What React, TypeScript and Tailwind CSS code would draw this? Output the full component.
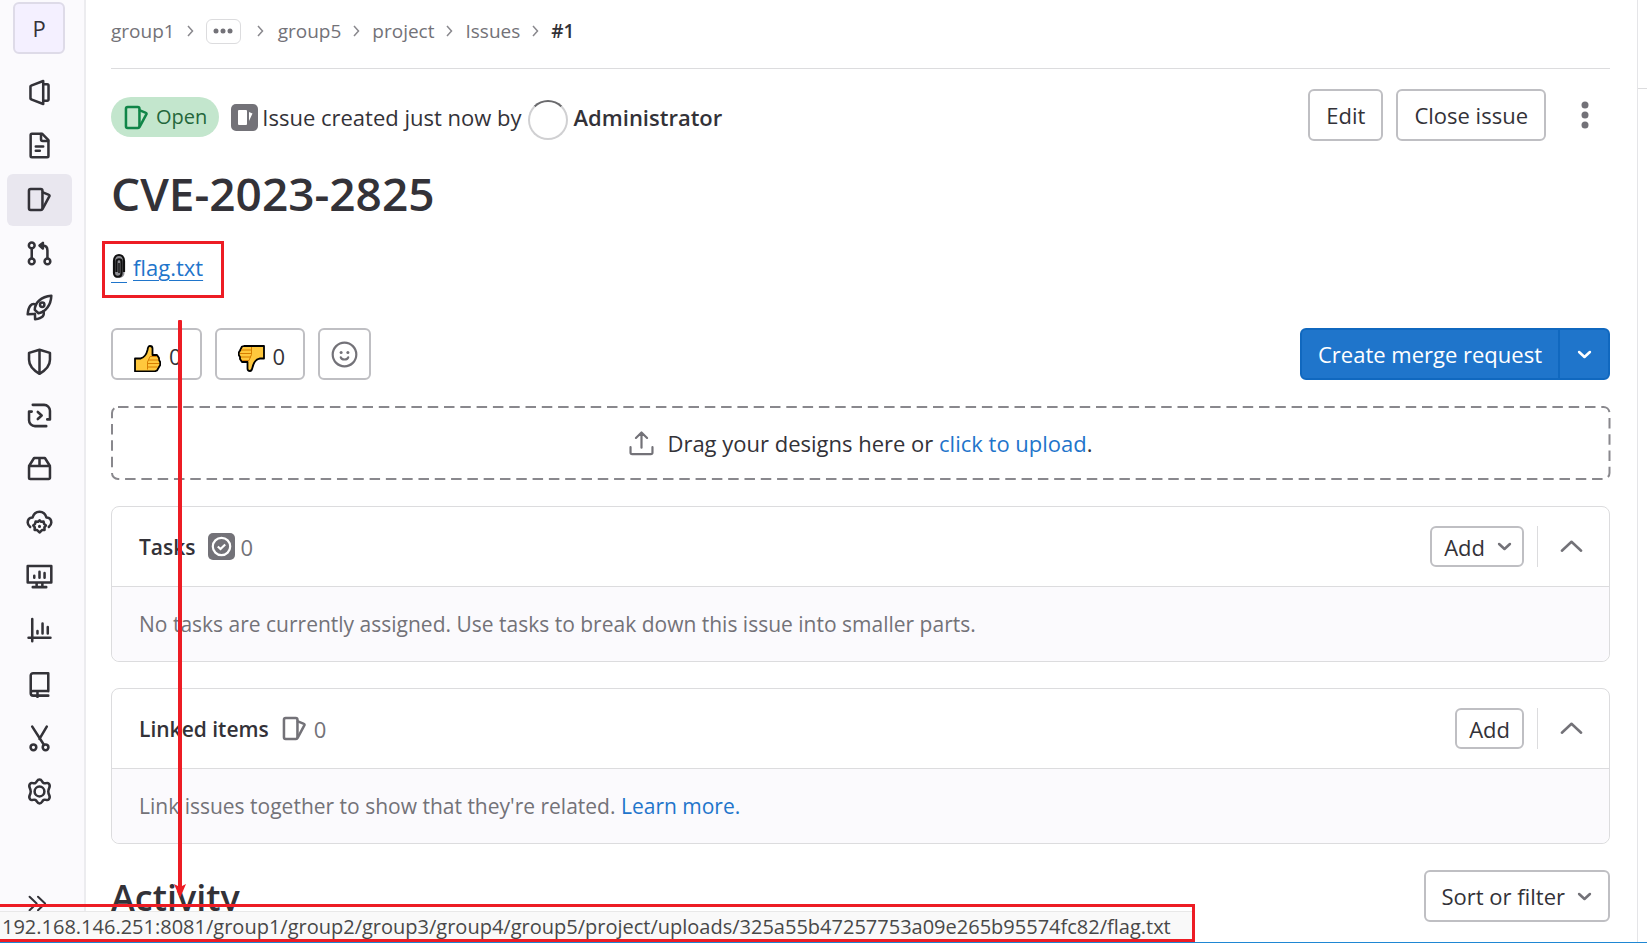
import type { ReactNode } from "react";

function Icon({ children, className = "size-[27px]" }: { children: ReactNode; className?: string }) {
  return (
    <svg
      viewBox="0 0 16 16"
      className={`shrink-0 ${className}`}
      fill="none"
      stroke="currentColor"
      strokeWidth="1.5"
      strokeLinecap="round"
      strokeLinejoin="round"
      aria-hidden="true"
    >
      {children}
    </svg>
  );
}

const issuePaths = (
  <>
    <rect x="1.75" y="1.75" width="8" height="12.5" rx="1" />
    <path d="M10 3.8l3.6 1.5a.5.5 0 0 1 .3.7L10 13.2" />
  </>
);

const navItems: { label: string; icon: ReactNode; active?: boolean }[] = [
  {
    label: "Project",
    icon: (
      <>
        <path d="M2.65 4.5a.6.6 0 0 1 .4-.55L10.2 1.2v13.6l-7.15-2.75a.6.6 0 0 1-.4-.55z" />
        <path d="M10.2 3.1h2.4a.75.75 0 0 1 .75.75v8.3a.75.75 0 0 1-.75.75h-2.4" />
      </>
    ),
  },
  {
    label: "Plan",
    icon: (
      <>
        <path d="M2.75 1.75A.75.75 0 0 1 3.5 1h6L13.3 4.8v9.45a.75.75 0 0 1-.75.75H3.5a.75.75 0 0 1-.75-.75z" />
        <path d="M8.9 1.2v3.1c0 .6.4 1 1 1h3.2M5.8 8.6h4.4M5.8 11.1h2.4" />
      </>
    ),
  },
  { label: "Issues", icon: issuePaths, active: true },
  {
    label: "Merge requests",
    icon: (
      <>
        <circle cx="3.4" cy="3.2" r="1.7" />
        <circle cx="3.4" cy="12.7" r="1.7" />
        <circle cx="12.7" cy="12.7" r="1.7" />
        <path d="M3.4 5v5.8M12.7 10.8V6.2c0-1.8-1-2.9-2.8-2.9H8.6" />
        <path d="M10 1.7v3.4L8 3.3z" fill="currentColor" />
      </>
    ),
  },
  {
    label: "Build",
    icon: (
      <>
        <path d="M5.2 9.4C5.2 5.2 8.9 1.5 15 1c-.2 5.6-3.4 9.6-7.6 10.4z" />
        <circle cx="9.6" cy="6.4" r="1.3" />
        <path d="M5.8 6.2C3 5.2 1.4 7.5 1 12l3.3-.2M10.3 10.2c.8 2.4-.2 4-4.900 4.800l-.1-3.300" />
      </>
    ),
  },
  {
    label: "Secure",
    icon: <path d="M8 1L14.2 2.9V7c0 3.7-2.2 6-6.2 8.3C4 13 1.8 10.7 1.8 7V2.9zM8 1v14" />,
  },
  {
    label: "Deploy",
    icon: (
      <>
        <path d="M4 1.7h6.7a3.5 3.5 0 0 1 3.5 3.5v5.100h-1.600M12 14.300H5.300a3.500 3.500 0 0 1-3.500-3.500V5.700h1.600" />
        <path d="M7 5.9L9.3 8 7 10.1" />
      </>
    ),
  },
  {
    label: "Packages",
    icon: (
      <path d="M1.8 6.5h12.4v7a.75.75 0 0 1-.75.75H2.55a.75.75 0 0 1-.75-.75zM1.8 6.5l3-4.7h6.4l3 4.7M8 2v4.3" />
    ),
  },
  {
    label: "Operate",
    icon: (
      <>
        <path d="M2.5 10.6C1.5 9.8 1 9 1 8c0-1.8 1.2-2.9 2.9-3C4.5 2.8 6 1.6 8 1.6s3.5 1.2 4.1 3.4c1.7.1 2.9 1.2 2.9 3 0 1-.5 1.8-1.5 2.6" />
        <path d="M8 6.7l1 .9 1.4-.2.3 1.4 1.1 1-.9 1.1.1 1.5-1.5.1L8 13.9l-1.400-1.400-1.500-.1.100-1.500-.9-1.100 1.100-1 .3-1.400 1.400.2z" />
        <circle cx="8" cy="10.3" r="0.5" fill="currentColor" strokeWidth="0.8" />
      </>
    ),
  },
  {
    label: "Monitor",
    icon: (
      <path d="M1 1.8h14v9.7H1zM4 14.3h8M6.3 11.7v2.4M9.7 11.7v2.4M4.9 7.5v1.2M8 5.2v3.5M11 6v2.7" />
    ),
  },
  {
    label: "Analyze",
    icon: <path d="M3.7 1.2v13.1M1.5 12.3h13M6.8 8.3v1.5M9.8 3.8v6M12.900 6v3.800" />,
  },
  {
    label: "Wiki",
    icon: (
      <path d="M13.2 12V1.3H4.2c-.8 0-1.4.6-1.4 1.4v10.5c0 .8.6 1.4 1.4 1.4h9M13.2 11.9H4.1c-.8 0-1.3.5-1.3 1.2M6.8 12.2v3.2" />
    ),
  },
  {
    label: "Snippets",
    icon: (
      <>
        <circle cx="4.4" cy="13.2" r="1.7" />
        <circle cx="11.6" cy="13.2" r="1.7" />
        <path d="M3.7 1l6.9 10.7M12.3 1L8 8.2" />
      </>
    ),
  },
  {
    label: "Settings",
    icon: (
      <>
        <path d="M8 .9c1.6 0 1.3 1.5 2.5 2.1s2-.7 3 .3c1.6 1.9-.3 2.3-.3 4.7s1.9 2.8.3 4.7c-1 1-1.9-.3-3 .3S9.6 15.1 8 15.1s-1.3-1.500-2.500-2.100-2 .7-3-.3C.9 10.800 2.800 10.400 2.800 8S.9 5.200 2.500 3.300c1-1 1.900.3 3-.3S6.400.9 8 .9z" />
        <circle cx="8" cy="8" r="2.9" />
      </>
    ),
  },
];

function Chevron({ className = "" }: { className?: string }) {
  return (
    <Icon className={`size-[27px] ${className}`}>
      <path d="M4.8 6.5L8 9.5l3.2-3" />
    </Icon>
  );
}

function ThumbUp() {
  return (
    <svg viewBox="0 0 27 27" className="size-[27px] shrink-0" aria-hidden="true">
      <path
        d="M1 13.500h5.500c3-.5 6-4 7-8.500C14 1.500 14.500 1 16 1s2.500 1 2.500 2.500V10H23l2 3v2l1.200 2v3L25 22l-2 3.500-2 .8H1z"
        fill="#ffc83d"
        stroke="#000"
        strokeWidth="1.8"
        strokeLinejoin="round"
      />
      <path d="M13.5 24.5V17l2.500-5.500h7M14 15h10.500M14 18.500h11M14 22h9.500" fill="none" stroke="#d67d00" strokeWidth="1" />
    </svg>
  );
}

function ThumbDown() {
  return (
    <svg viewBox="0 0 27 27" className="size-[27px] shrink-0" aria-hidden="true">
      <path
        d="M26 1v12.500h-4c-3.500.5-6.500 4-7.500 9-.5 2.500-1 3.500-2.500 3.500s-2.500-1-2.500-2.500V17H4l-2-3v-2L.8 10V7.500L2 5.500 4 1.500 6 1z"
        fill="#ffc83d"
        stroke="#000"
        strokeWidth="1.8"
        strokeLinejoin="round"
      />
      <path d="M13.5 2v7.500l-2.500 6H4M13 5H3M13 8.500H2M13 12H3" fill="none" stroke="#d67d00" strokeWidth="1" />
    </svg>
  );
}

function Separator() {
  return (
    <svg viewBox="0 0 7 12" className="h-3 w-[7px] shrink-0" fill="none" stroke="#89888d" strokeWidth="1.5" aria-hidden="true">
      <path d="M1 1l4.500 5L1 11" />
    </svg>
  );
}

const outline = "flex items-center rounded-md border-2 border-[#bfbfc3] bg-white";

function Card({
  title,
  icon,
  action,
  children,
}: {
  title: string;
  icon: ReactNode;
  action: ReactNode;
  children: ReactNode;
}) {
  return (
    <section className="mt-[26px] rounded-lg border border-[#dcdcde] bg-white">
      <header className="flex h-20 items-center border-b border-[#dcdcde] pr-6 pl-[27px]">
        <h3 className="text-[21px] font-semibold">{title}</h3>
        <span className="ml-3 flex items-center gap-1.5 text-[#737278]">
          {icon}
          <span>0</span>
        </span>
        <div className="ml-auto flex items-center">
          {action}
          <span className="ml-[13px] h-[41px] border-l border-[#dcdcde]" />
          <button aria-label={`Collapse ${title}`} className="ml-5 text-[#737278]">
            <Icon className="size-[27px]">
              <path d="M2.3 10.500L8 5.200l5.700 5.300" />
            </Icon>
          </button>
        </div>
      </header>
      <p className="flex h-[74px] items-center rounded-b-lg bg-[#fbfafd] px-[27px] text-[21px] text-[#737278]">
        <span>{children}</span>
      </p>
    </section>
  );
}

export default function App() {
  return (
    <div className="relative flex h-screen overflow-hidden bg-white font-['Open_Sans','Noto_Sans',sans-serif] text-[22px] leading-8 text-[#333238]">
      <aside className="flex w-[86px] shrink-0 flex-col border-r-2 border-[#ececef] bg-[#fbfafd]">
        <a
          href="#project"
          className="mt-0.5 ml-[13px] flex size-[52px] shrink-0 items-center justify-center rounded-md border-2 border-[#dedbe8] bg-[#f4f0ff]"
        >
          P
        </a>
        <nav className="mt-3 ml-[7px] flex h-[752px] w-[65px] shrink-0 flex-col justify-between">
          {navItems.map((item) => (
            <a
              key={item.label}
              href="#nav"
              aria-label={item.label}
              className={`flex h-[52px] items-center justify-center rounded-md ${item.active ? "bg-[#e9e7ef]" : ""}`}
            >
              <Icon>{item.icon}</Icon>
            </a>
          ))}
        </nav>
        <button aria-label="Expand sidebar" className="mt-auto mb-[28px] ml-6 w-[27px]">
          <Icon className="size-[27px]">
            <path d="M3.3 4L7.5 8l-4.200 4M8.300 4l4.200 4-4.200 4" strokeWidth="1.2" />
          </Icon>
        </button>
      </aside>

      <main className="min-w-0 flex-1 pr-[27px] pl-[25px]">
        <nav
          aria-label="Breadcrumb"
          className="flex h-[69px] items-center gap-3 border-b border-[#dcdcde] pb-1.5 text-[19px] text-[#737278]"
        >
          <a href="#group1">group1</a>
          <Separator />
          <button aria-label="Show more" className="mr-1 flex h-[25px] w-[35px] items-center justify-center rounded-md border border-[#dcdcde]">
            <svg viewBox="0 0 20 6" className="h-1.5 w-5" fill="currentColor" aria-hidden="true">
              <circle cx="3" cy="3" r="2.5" />
              <circle cx="10" cy="3" r="2.5" />
              <circle cx="17" cy="3" r="2.5" />
            </svg>
          </button>
          <Separator />
          <a href="#group5" className="ml-0.5">group5</a>
          <Separator />
          <a href="#project">project</a>
          <Separator />
          <a href="#issues">Issues</a>
          <Separator />
          <a href="#1" className="font-semibold text-[#333238]">#1</a>
        </nav>

        <div className="mt-5 flex h-[52px] items-center">
          <div className="flex items-center pt-1">
            <span className="flex h-10 items-center gap-1.5 rounded-full bg-[#c3e6cd] px-3 text-[20px] text-[#24663b]">
              <Icon className="size-[27px] text-[#108548]">{issuePaths}</Icon>
              Open
            </span>
            <svg viewBox="0 0 27 27" className="ml-3 size-[27px] shrink-0" aria-hidden="true">
              <rect width="27" height="27" rx="5" fill="#737278" />
              <rect x="7" y="6" width="9" height="15" rx="1" fill="#fff" />
              <path d="M18 8l3.500 1.500L18 17z" fill="#fff" />
            </svg>
            <span className="ml-1">Issue created just now by</span>
            <span className="mx-1.5 mt-1.5 size-10 rounded-full border-2 border-[#d0d0d2] border-t-[#6a6a6d] bg-white" />
            <a href="#admin" className="font-semibold">Administrator</a>
          </div>
          <div className="ml-auto flex items-center gap-[13px]">
            <button className={`${outline} h-[52px] px-4`}>Edit</button>
            <button className={`${outline} h-[52px] px-4`}>Close issue</button>
            <button aria-label="Issue actions" className="flex h-[52px] w-[51px] items-center justify-center text-[#737278]">
              <svg viewBox="0 0 8 28" className="h-7 w-2" fill="currentColor" aria-hidden="true">
                <circle cx="4" cy="4" r="3.5" />
                <circle cx="4" cy="14" r="3.5" />
                <circle cx="4" cy="24" r="3.5" />
              </svg>
            </button>
          </div>
        </div>

        <h1 className="mt-[22px] text-[46px] leading-[60px] font-semibold">CVE-2023-2825</h1>

        <p className="mt-7 flex items-center text-[#1f75cb]">
          <a href="#flag" className="flex items-end gap-1.5">
            <span className="flex h-8 w-4 items-center justify-center border-b border-[#1f75cb]">
              <svg viewBox="0 0 14 28" className="h-7 w-3.5" fill="none" aria-hidden="true">
                <path d="M1.5 8a5.500 5.500 0 0 1 11 0v12a5 5 0 0 1-10 0z" fill="#8e8e93" />
                <path
                  d="M4.5 19V8.500c0-3 5-3 5 0V20c0 5-7.500 5-7.500 0V8C2 0 12 0 12 8v11"
                  stroke="#111"
                  strokeWidth="2.2"
                />
                <path d="M7 10v10" stroke="#111" strokeWidth="1.5" />
              </svg>
            </span>
            <span className="underline decoration-1 underline-offset-4">flag.txt</span>
          </a>
        </p>

        <div className="mt-[45px] flex h-[52px] items-stretch gap-[13px]">
          <button aria-label="Thumbs up" className={`${outline} gap-2 pt-1 pr-[18px] pl-[21px]`}>
            <span className="pt-1"><ThumbUp /></span>
            <span>0</span>
          </button>
          <button aria-label="Thumbs down" className={`${outline} gap-2 pt-1 pr-[18px] pl-[21px]`}>
            <span className="pt-1"><ThumbDown /></span>
            <span>0</span>
          </button>
          <button aria-label="Add reaction" className={`${outline} w-[53px] justify-center text-[#737278]`}>
            <Icon className="size-[27px]">
              <circle cx="8" cy="8" r="7" strokeWidth="1.3" />
              <path d="M5.8 9.7c.6 1.7 3.8 1.7 4.4 0" strokeWidth="1.3" />
              <circle cx="6" cy="6.8" r="0.9" fill="currentColor" stroke="none" />
              <circle cx="10" cy="6.8" r="0.9" fill="currentColor" stroke="none" />
            </Icon>
          </button>
          <div className="ml-auto flex rounded-md border-2 border-[#1068bf] bg-[#1f75cb] text-white">
            <button className="px-4">Create merge request</button>
            <button aria-label="More options" className="flex w-[50px] items-center justify-center border-l-2 border-[#1068bf]">
              <Chevron />
            </button>
          </div>
        </div>

        <div className="relative mt-[26px] flex h-[74px] items-center justify-center">
          <svg className="absolute inset-0 size-full overflow-visible" aria-hidden="true">
            <rect
              x="1"
              y="1"
              width="99.9%"
              height="72"
              rx="6"
              fill="none"
              stroke="#89888d"
              strokeWidth="2"
              strokeDasharray="10.5 5.8"
            />
          </svg>
          <div className="relative flex items-center">
            <Icon className="mr-3 size-[27px] text-[#737278]">
              <path d="M8 10.5V1.8M4.7 4.7L8 1.5l3.3 3.2M1.5 10.2v3.1c0 .6.4 1 1 1h11c.6 0 1-.4 1-1v-3.1" strokeWidth="1.3" />
            </Icon>
            <span>
              Drag your designs here or <a href="#upload" className="text-[#1f75cb]">click to upload</a>.
            </span>
          </div>
        </div>

        <Card
          title="Tasks"
          icon={
            <svg viewBox="0 0 27 27" className="size-[27px]" aria-hidden="true">
              <rect width="27" height="27" rx="5" fill="#737278" />
              <circle cx="13.5" cy="13.5" r="8.7" fill="none" stroke="#fff" strokeWidth="2.2" />
              <path d="M9.8 13.5l2.700 2.500 4.700-4.500" fill="none" stroke="#fff" strokeWidth="2.2" />
            </svg>
          }
          action={
            <button className={`${outline} h-[41px] gap-1.5 pr-1 pl-3`}>
              Add
              <Chevron className="text-[#737278]" />
            </button>
          }
        >
          No tasks are currently assigned. Use tasks to break down this issue into smaller parts.
        </Card>

        <Card
          title="Linked items"
          icon={<Icon className="size-[27px]">{issuePaths}</Icon>}
          action={<button className={`${outline} h-[41px] px-3`}>Add</button>}
        >
          Link issues together to show that they're related.{" "}
          <a href="#learn" className="text-[#1f75cb]">Learn more.</a>
        </Card>

        <div className="mt-[26px] flex items-center justify-between">
          <h2 className="pt-1 text-[36px] font-semibold">Activity</h2>
          <button className={`${outline} h-[52px] gap-1.5 pr-2.5 pl-4`}>
            Sort or filter
            <Chevron className="text-[#737278]" />
          </button>
        </div>
      </main>

      <aside aria-label="Details" className="w-[10px] shrink-0 border-l border-[#e5e5e8]">
        <div className="h-[89px] border-b border-[#dcdcde]" />
      </aside>

      <div className="absolute inset-x-0 bottom-0 h-[3px] border-t border-[#1f87d3] bg-white" />
      <div className="absolute bottom-[3px] left-0 flex h-[31px] w-[1194px] items-center border-t border-[#e8e8e8] bg-[#f9f9f9] pl-0.5 text-[20px] whitespace-nowrap text-[#484848]">
        192.168.146.251:8081/group1/group2/group3/group4/group5/project/uploads/325a55b47257753a09e265b95574fc82/flag.txt
      </div>
      <div className="absolute bottom-[3px] -left-1 h-[38px] w-[1199px] border-3 border-[#ed1c24]" />
      <div className="absolute top-[241px] left-[102px] h-[57px] w-[122px] border-3 border-[#ed1c24]" />
      <svg className="absolute top-[320px] left-[173px] h-[579px] w-[14px]" viewBox="0 0 14 579" fill="#ed1c24" aria-hidden="true">
        <rect x="5" y="0" width="4" height="568" rx="1" />
        <path d="M1 564l6 3 6-3-6 14z" />
      </svg>
    </div>
  );
}
